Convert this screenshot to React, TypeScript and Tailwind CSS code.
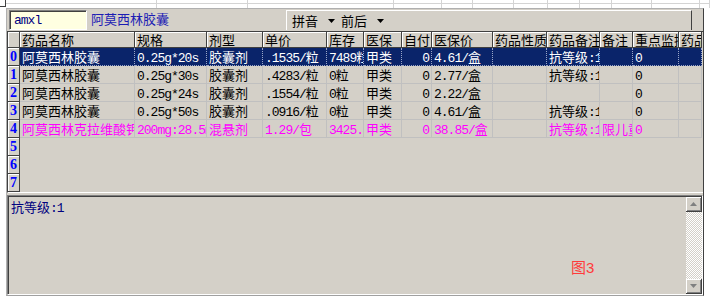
import React from 'react';

const COLS = [
  { name: '药品名称', w: 115 },
  { name: '规格', w: 72 },
  { name: '剂型', w: 56 },
  { name: '单价', w: 64 },
  { name: '库存', w: 37 },
  { name: '医保', w: 38 },
  { name: '自付', w: 30, right: true },
  { name: '医保价', w: 61 },
  { name: '药品性质', w: 54 },
  { name: '药品备注', w: 53 },
  { name: '备注', w: 33 },
  { name: '重点监控', w: 46 },
  { name: '药品', w: 23 },
];

const ROWS = [
  ['阿莫西林胶囊', '0.25g*20s', '胶囊剂', '.1535/粒', '7489粒', '甲类', '0', '4.61/盒', '', '抗等级:1', '', '0', ''],
  ['阿莫西林胶囊', '0.25g*30s', '胶囊剂', '.4283/粒', '0粒', '甲类', '0', '2.77/盒', '', '抗等级:1', '', '0', ''],
  ['阿莫西林胶囊', '0.25g*24s', '胶囊剂', '.1554/粒', '0粒', '甲类', '0', '2.22/盒', '', '', '', '0', ''],
  ['阿莫西林胶囊', '0.25g*50s', '胶囊剂', '.0916/粒', '0粒', '甲类', '0', '4.61/盒', '', '抗等级:1', '', '0', ''],
  ['阿莫西林克拉维酸钾', '200mg:28.5mg', '混悬剂', '1.29/包', '3425.5', '甲类', '0', '38.85/盒', '', '抗等级:1', '限儿童', '0', ''],
];

// background sheet columns peeking out above the dialog
const SHEET = [151, 91, 146, 48, 31, 41, 34, 32, 32, 40, 48, 10];

function Mixed({ text }: { text: string }) {
  const parts = text.split(/([\x20-\x7e]+)/).filter(Boolean);
  return (
    <>
      {parts.map((p, i) =>
        /^[\x20-\x7e]+$/.test(p) ? (
          <span key={i} className="font-['Liberation_Mono'] tracking-[-1px]">{p}</span>
        ) : (
          <span key={i}>{p}</span>
        )
      )}
    </>
  );
}

function Arrow({ up, color = '#808080' }: { up?: boolean; color?: string }) {
  return (
    <svg width="7" height="4" viewBox="0 0 7 4">
      <path d={up ? 'M0 4 L3.5 0 L7 4 Z' : 'M0 0 L7 0 L3.5 4 Z'} fill={color} />
    </svg>
  );
}

export default function App() {
  return (
    <div className="w-[710px] h-[299px] bg-white overflow-hidden font-['Noto_Sans_CJK_SC',sans-serif] text-[13px] leading-[18px] text-black">
      <div className="flex h-[8px]">
        <div className="w-[6px] h-[7px] border-r border-b border-[#404040]" />
        {SHEET.map((w, i) => (
          <div key={i} style={{ width: w }} className="h-full border-r border-[#d4d4d4]">
            <div className="h-[4px] border-b border-[#d4d4d4]" />
          </div>
        ))}
      </div>

      <div className="flex">
        <div className="w-[6px]" />
        <div className="w-[698px] h-[288px] bg-[#d4d0c8] border-l border-t border-[#b0b0b0] border-r-[#404040] border-r border-b border-b-[#a0a0a0] flex flex-col">
          <div className="flex h-[20px] mt-[1px] pl-[2px]">
            <div className="w-[78px] h-[20px] bg-[#ffffe1] border border-[#808080] border-b-white border-r-white shadow-[inset_1px_1px_0_#404040] pl-[4px] pt-[1px] text-[#000080] font-['Liberation_Mono'] tracking-[-1px]">
              amxl
            </div>
            <div className="w-[199px] pl-[4px] text-[#1c1cb4] leading-[18px]">阿莫西林胶囊</div>
            <div className="w-[406px] flex items-center pl-[5px] border-l border-white border-r border-r-[#404040] border-t border-t-white">
              <span>拼音</span>
              <span className="ml-[10px] mr-[6px] flex items-center"><Arrow color="#000" /></span>
              <span>前后</span>
              <span className="ml-[10px] flex items-center"><Arrow color="#000" /></span>
            </div>
          </div>

          <div className="mt-[1px] h-[162px] border-t border-l border-[#404040] border-b border-b-white flex flex-col">
            <div className="flex h-[16px] leading-[16px]">
              <div className="w-[12px] bg-[#d4d0c8] border-r border-b border-[#404040] shadow-[inset_1px_1px_0_#fff]" />
              {COLS.map((c) => (
                <div
                  key={c.name}
                  style={{ width: c.w }}
                  className="overflow-x-clip whitespace-nowrap pl-[2px] border-r border-b border-[#404040] shadow-[inset_1px_1px_0_#fff]"
                >
                  {c.name}
                </div>
              ))}
            </div>
            {Array.from({ length: 8 }).map((_, r) => {
              const row = ROWS[r];
              const sel = r === 0;
              const pink = r === 4;
              return (
                <div key={r} className="flex h-[18px]">
                  <div className="w-[12px] border-r border-b border-[#404040] shadow-[inset_1px_1px_0_#fff] text-[#0000ff] font-bold font-['Liberation_Serif'] text-[14px] leading-[18px] pl-[2px]">
                    {r}
                  </div>
                  {row &&
                    COLS.map((c, i) => (
                      <div
                        key={i}
                        style={{ width: c.w }}
                        className={
                          'overflow-hidden whitespace-nowrap px-[2px] border-r border-b ' +
                          (c.right ? 'text-right ' : '') +
                          (sel
                            ? 'bg-[#0a246a] text-white border-dotted border-[#9aa6c8]'
                            : pink
                            ? 'text-[#ff00ff] border-[#c0c0c0]'
                            : 'border-[#c0c0c0]')
                        }
                      >
                        <Mixed text={row[i]} />
                      </div>
                    ))}
                </div>
              );
            })}
          </div>

          <div className="mt-[2px] ml-0 h-[100px] border border-[#808080] border-b-white border-r-white flex">
            <div className="flex-1 flex border-t border-l border-[#404040]">
              <div className="flex-1 pl-[2px] pt-[1px] text-[#000080] relative">
                <Mixed text="抗等级:1" />
                <div className="absolute left-[562px] top-[62px] text-[#ff3b3b] text-[15px] leading-[16px]">
                  图<span className="font-['Liberation_Sans']">3</span>
                </div>
              </div>
              <div className="w-[16px] flex flex-col">
                <div className="h-[15px] flex items-center justify-center border-r border-b border-[#404040] shadow-[inset_1px_1px_0_#fff,inset_-1px_-1px_0_#808080]">
                  <Arrow up />
                </div>
                <div className="flex-1 bg-[repeating-conic-gradient(#d4d0c8_0_25%,#ffffff_0_50%)] bg-[length:2px_2px]" />
                <div className="h-[15px] flex items-center justify-center border-r border-b border-[#404040] shadow-[inset_1px_1px_0_#fff,inset_-1px_-1px_0_#808080]">
                  <Arrow />
                </div>
              </div>
            </div>
          </div>
        </div>
      </div>
    </div>
  );
}
